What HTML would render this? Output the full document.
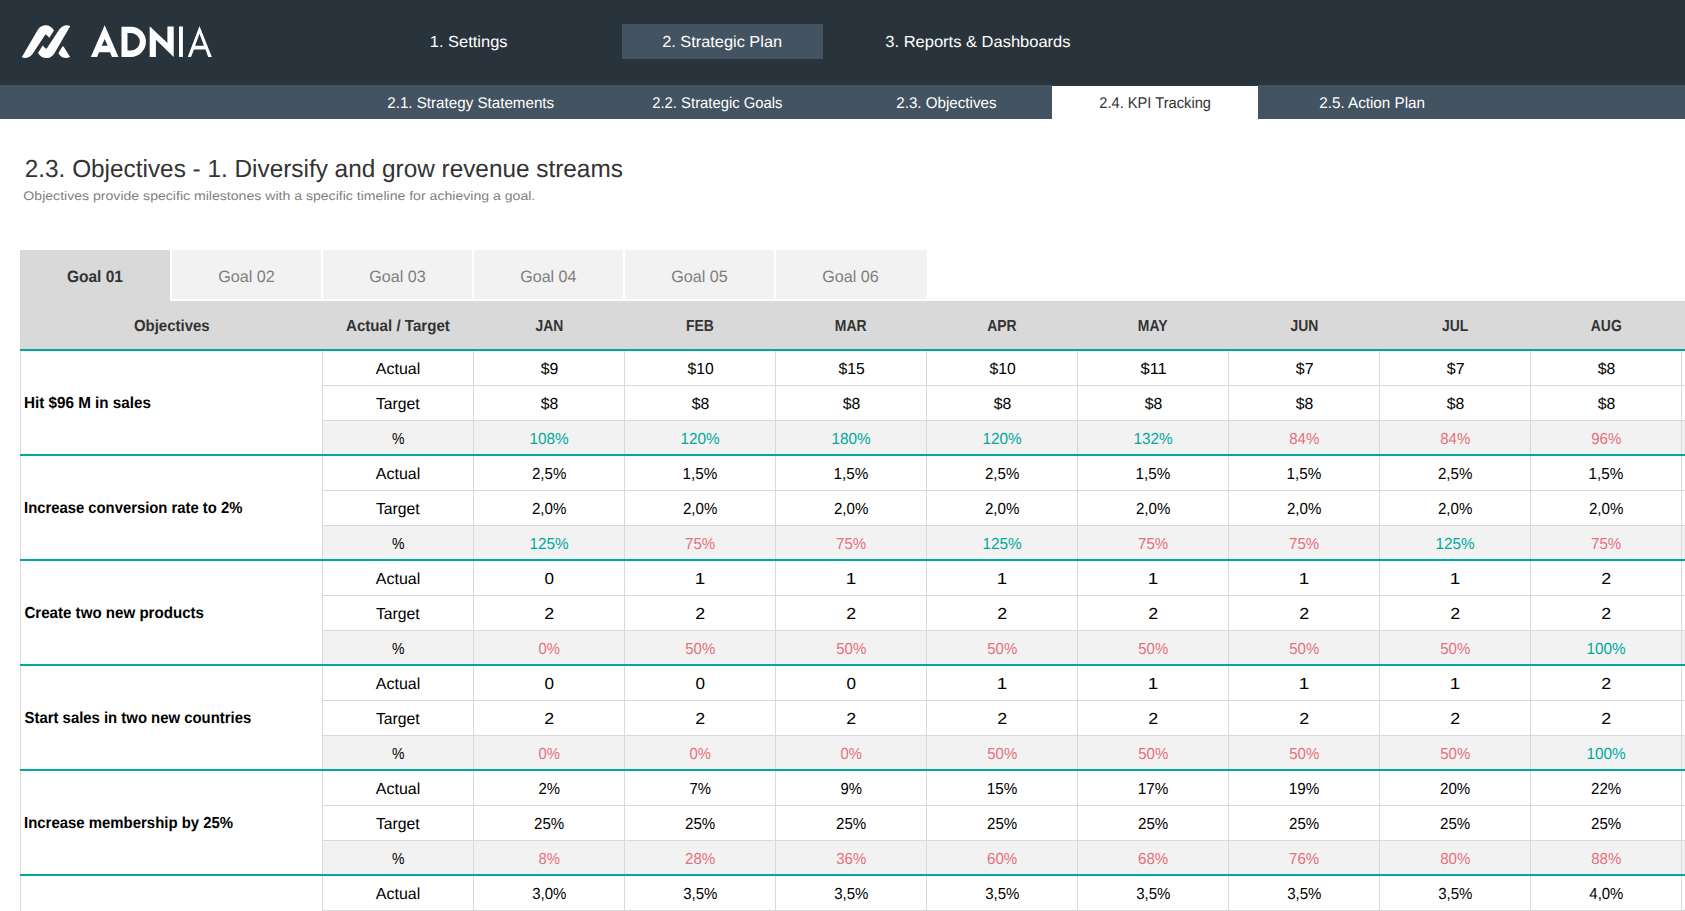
<!DOCTYPE html>
<html><head><meta charset="utf-8"><title>KPI Tracking</title>
<style>
html,body{margin:0;padding:0;background:#ffffff;overflow:hidden;}
svg{display:block;}
text{font-family:"Liberation Sans", sans-serif;white-space:pre;text-rendering:geometricPrecision;}
</style></head>
<body>
<svg width="1685" height="911" viewBox="0 0 1685 911">
<rect x="0" y="0" width="1685" height="85" fill="#29333b"/>
<rect x="622" y="24" width="201" height="35" fill="#445361"/>
<rect x="0" y="85" width="1685" height="34" fill="#445361"/>
<rect x="1052" y="86" width="206" height="33" fill="#ffffff"/>
<rect x="1052" y="85" width="206" height="1" fill="#2d3844"/>
<text x="429.76" y="47" font-size="15.99" fill="#ffffff" textLength="77.81" lengthAdjust="spacingAndGlyphs">1. Settings</text>
<text x="662.18" y="47" font-size="15.99" fill="#ffffff" textLength="119.92" lengthAdjust="spacingAndGlyphs">2. Strategic Plan</text>
<text x="885.34" y="47" font-size="15.99" fill="#ffffff" textLength="185.21" lengthAdjust="spacingAndGlyphs">3. Reports &amp; Dashboards</text>
<text x="387.24" y="108" font-size="15.55" fill="#ffffff" textLength="166.90" lengthAdjust="spacingAndGlyphs">2.1. Strategy Statements</text>
<text x="652.26" y="108" font-size="15.55" fill="#ffffff" textLength="130.30" lengthAdjust="spacingAndGlyphs">2.2. Strategic Goals</text>
<text x="896.24" y="108" font-size="15.55" fill="#ffffff" textLength="100.28" lengthAdjust="spacingAndGlyphs">2.3. Objectives</text>
<text x="1099.27" y="108" font-size="15.55" fill="#333333" textLength="111.69" lengthAdjust="spacingAndGlyphs">2.4. KPI Tracking</text>
<text x="1319.24" y="108" font-size="15.55" fill="#ffffff" textLength="105.74" lengthAdjust="spacingAndGlyphs">2.5. Action Plan</text>
<text x="24.78" y="177" font-size="24.71" fill="#333333" textLength="598.09" lengthAdjust="spacingAndGlyphs">2.3. Objectives - 1. Diversify and grow revenue streams</text>
<text x="23.37" y="200" font-size="12.50" fill="#7f7f7f" textLength="511.91" lengthAdjust="spacingAndGlyphs">Objectives provide specific milestones with a specific timeline for achieving a goal.</text>
<rect x="20" y="250" width="150" height="51" fill="#d9d9d9"/>
<rect x="172" y="250" width="149" height="49" fill="#f2f2f2"/>
<rect x="323" y="250" width="149" height="49" fill="#f2f2f2"/>
<rect x="474" y="250" width="149" height="49" fill="#f2f2f2"/>
<rect x="625" y="250" width="149" height="49" fill="#f2f2f2"/>
<rect x="776" y="250" width="151" height="49" fill="#f2f2f2"/>
<text x="66.88" y="282" font-size="16.42" fill="#333333" font-weight="bold" textLength="56.05" lengthAdjust="spacingAndGlyphs">Goal 01</text>
<text x="218.19" y="282" font-size="16.42" fill="#7f7f7f" textLength="56.66" lengthAdjust="spacingAndGlyphs">Goal 02</text>
<text x="369.19" y="282" font-size="16.42" fill="#7f7f7f" textLength="56.57" lengthAdjust="spacingAndGlyphs">Goal 03</text>
<text x="520.20" y="282" font-size="16.42" fill="#7f7f7f" textLength="56.33" lengthAdjust="spacingAndGlyphs">Goal 04</text>
<text x="671.19" y="282" font-size="16.42" fill="#7f7f7f" textLength="56.49" lengthAdjust="spacingAndGlyphs">Goal 05</text>
<text x="822.19" y="282" font-size="16.42" fill="#7f7f7f" textLength="56.57" lengthAdjust="spacingAndGlyphs">Goal 06</text>
<rect x="20" y="301" width="1665" height="48" fill="#d9d9d9"/>
<text x="133.90" y="331" font-size="15.99" fill="#333333" font-weight="bold" textLength="75.75" lengthAdjust="spacingAndGlyphs">Objectives</text>
<text x="346.02" y="331" font-size="15.99" fill="#333333" font-weight="bold" textLength="103.85" lengthAdjust="spacingAndGlyphs">Actual / Target</text>
<text x="535.44" y="331" font-size="15.99" fill="#333333" font-weight="bold" textLength="27.83" lengthAdjust="spacingAndGlyphs">JAN</text>
<text x="685.95" y="331" font-size="15.99" fill="#333333" font-weight="bold" textLength="27.82" lengthAdjust="spacingAndGlyphs">FEB</text>
<text x="834.86" y="331" font-size="15.99" fill="#333333" font-weight="bold" textLength="31.68" lengthAdjust="spacingAndGlyphs">MAR</text>
<text x="987.29" y="331" font-size="15.99" fill="#333333" font-weight="bold" textLength="29.37" lengthAdjust="spacingAndGlyphs">APR</text>
<text x="1137.84" y="331" font-size="15.99" fill="#333333" font-weight="bold" textLength="29.63" lengthAdjust="spacingAndGlyphs">MAY</text>
<text x="1290.44" y="331" font-size="15.99" fill="#333333" font-weight="bold" textLength="27.83" lengthAdjust="spacingAndGlyphs">JUN</text>
<text x="1441.96" y="331" font-size="15.99" fill="#333333" font-weight="bold" textLength="26.28" lengthAdjust="spacingAndGlyphs">JUL</text>
<text x="1590.80" y="331" font-size="15.99" fill="#333333" font-weight="bold" textLength="30.91" lengthAdjust="spacingAndGlyphs">AUG</text>
<rect x="20" y="349" width="1665" height="2" fill="#00a99d"/>
<rect x="323" y="421" width="1362" height="33" fill="#f2f2f2"/>
<rect x="20" y="454" width="1665" height="2" fill="#00a99d"/>
<rect x="323" y="526" width="1362" height="33" fill="#f2f2f2"/>
<rect x="20" y="559" width="1665" height="2" fill="#00a99d"/>
<rect x="323" y="631" width="1362" height="33" fill="#f2f2f2"/>
<rect x="20" y="664" width="1665" height="2" fill="#00a99d"/>
<rect x="323" y="736" width="1362" height="33" fill="#f2f2f2"/>
<rect x="20" y="769" width="1665" height="2" fill="#00a99d"/>
<rect x="323" y="841" width="1362" height="33" fill="#f2f2f2"/>
<rect x="20" y="874" width="1665" height="2" fill="#00a99d"/>
<rect x="323" y="946" width="1362" height="33" fill="#f2f2f2"/>
<rect x="20" y="979" width="1665" height="2" fill="#00a99d"/>
<rect x="322" y="385" width="1363" height="1" fill="#d9d9d9"/>
<rect x="322" y="420" width="1363" height="1" fill="#d9d9d9"/>
<rect x="322" y="490" width="1363" height="1" fill="#d9d9d9"/>
<rect x="322" y="525" width="1363" height="1" fill="#d9d9d9"/>
<rect x="322" y="595" width="1363" height="1" fill="#d9d9d9"/>
<rect x="322" y="630" width="1363" height="1" fill="#d9d9d9"/>
<rect x="322" y="700" width="1363" height="1" fill="#d9d9d9"/>
<rect x="322" y="735" width="1363" height="1" fill="#d9d9d9"/>
<rect x="322" y="805" width="1363" height="1" fill="#d9d9d9"/>
<rect x="322" y="840" width="1363" height="1" fill="#d9d9d9"/>
<rect x="322" y="910" width="1363" height="1" fill="#d9d9d9"/>
<rect x="322" y="945" width="1363" height="1" fill="#d9d9d9"/>
<rect x="20" y="351" width="1" height="560" fill="#d9d9d9"/>
<rect x="322" y="351" width="1" height="560" fill="#d9d9d9"/>
<rect x="473" y="351" width="1" height="560" fill="#d9d9d9"/>
<rect x="624" y="351" width="1" height="560" fill="#d9d9d9"/>
<rect x="775" y="351" width="1" height="560" fill="#d9d9d9"/>
<rect x="926" y="351" width="1" height="560" fill="#d9d9d9"/>
<rect x="1077" y="351" width="1" height="560" fill="#d9d9d9"/>
<rect x="1228" y="351" width="1" height="560" fill="#d9d9d9"/>
<rect x="1379" y="351" width="1" height="560" fill="#d9d9d9"/>
<rect x="1530" y="351" width="1" height="560" fill="#d9d9d9"/>
<rect x="1681" y="351" width="1" height="560" fill="#d9d9d9"/>
<rect x="20" y="454" width="1665" height="2" fill="#00a99d"/>
<rect x="20" y="559" width="1665" height="2" fill="#00a99d"/>
<rect x="20" y="664" width="1665" height="2" fill="#00a99d"/>
<rect x="20" y="769" width="1665" height="2" fill="#00a99d"/>
<rect x="20" y="874" width="1665" height="2" fill="#00a99d"/>
<rect x="20" y="979" width="1665" height="2" fill="#00a99d"/>
<text x="24.01" y="408" font-size="15.99" fill="#000000" font-weight="bold" textLength="126.93" lengthAdjust="spacingAndGlyphs">Hit $96 M in sales</text>
<text x="540.77" y="374" font-size="15.99" fill="#000000" textLength="17.65" lengthAdjust="spacingAndGlyphs">$9</text>
<text x="540.77" y="409" font-size="15.99" fill="#000000" textLength="17.56" lengthAdjust="spacingAndGlyphs">$8</text>
<text x="529.40" y="444" font-size="15.99" fill="#00a99d" textLength="39.16" lengthAdjust="spacingAndGlyphs">108%</text>
<text x="687.46" y="374" font-size="15.99" fill="#000000" textLength="26.20" lengthAdjust="spacingAndGlyphs">$10</text>
<text x="691.77" y="409" font-size="15.99" fill="#000000" textLength="17.56" lengthAdjust="spacingAndGlyphs">$8</text>
<text x="680.40" y="444" font-size="15.99" fill="#00a99d" textLength="39.16" lengthAdjust="spacingAndGlyphs">120%</text>
<text x="838.46" y="374" font-size="15.99" fill="#000000" textLength="26.20" lengthAdjust="spacingAndGlyphs">$15</text>
<text x="842.77" y="409" font-size="15.99" fill="#000000" textLength="17.56" lengthAdjust="spacingAndGlyphs">$8</text>
<text x="831.40" y="444" font-size="15.99" fill="#00a99d" textLength="39.16" lengthAdjust="spacingAndGlyphs">180%</text>
<text x="989.46" y="374" font-size="15.99" fill="#000000" textLength="26.20" lengthAdjust="spacingAndGlyphs">$10</text>
<text x="993.77" y="409" font-size="15.99" fill="#000000" textLength="17.56" lengthAdjust="spacingAndGlyphs">$8</text>
<text x="982.40" y="444" font-size="15.99" fill="#00a99d" textLength="39.16" lengthAdjust="spacingAndGlyphs">120%</text>
<text x="1140.46" y="374" font-size="15.99" fill="#000000" textLength="26.34" lengthAdjust="spacingAndGlyphs">$11</text>
<text x="1144.77" y="409" font-size="15.99" fill="#000000" textLength="17.56" lengthAdjust="spacingAndGlyphs">$8</text>
<text x="1133.40" y="444" font-size="15.99" fill="#00a99d" textLength="39.16" lengthAdjust="spacingAndGlyphs">132%</text>
<text x="1295.77" y="374" font-size="15.99" fill="#000000" textLength="17.73" lengthAdjust="spacingAndGlyphs">$7</text>
<text x="1295.77" y="409" font-size="15.99" fill="#000000" textLength="17.56" lengthAdjust="spacingAndGlyphs">$8</text>
<text x="1289.18" y="444" font-size="15.99" fill="#e6707a" textLength="30.12" lengthAdjust="spacingAndGlyphs">84%</text>
<text x="1446.77" y="374" font-size="15.99" fill="#000000" textLength="17.73" lengthAdjust="spacingAndGlyphs">$7</text>
<text x="1446.77" y="409" font-size="15.99" fill="#000000" textLength="17.56" lengthAdjust="spacingAndGlyphs">$8</text>
<text x="1440.18" y="444" font-size="15.99" fill="#e6707a" textLength="30.12" lengthAdjust="spacingAndGlyphs">84%</text>
<text x="1597.77" y="374" font-size="15.99" fill="#000000" textLength="17.56" lengthAdjust="spacingAndGlyphs">$8</text>
<text x="1597.77" y="409" font-size="15.99" fill="#000000" textLength="17.56" lengthAdjust="spacingAndGlyphs">$8</text>
<text x="1591.18" y="444" font-size="15.99" fill="#e6707a" textLength="30.12" lengthAdjust="spacingAndGlyphs">96%</text>
<text x="375.82" y="374" font-size="15.99" fill="#000000" textLength="44.39" lengthAdjust="spacingAndGlyphs">Actual</text>
<text x="375.88" y="409" font-size="15.99" fill="#000000" textLength="43.86" lengthAdjust="spacingAndGlyphs">Target</text>
<text x="392.11" y="444" font-size="15.99" fill="#000000" textLength="12.47" lengthAdjust="spacingAndGlyphs">%</text>
<text x="24.04" y="513" font-size="15.99" fill="#000000" font-weight="bold" textLength="218.32" lengthAdjust="spacingAndGlyphs">Increase conversion rate to 2%</text>
<text x="531.97" y="479" font-size="15.99" fill="#000000" textLength="34.42" lengthAdjust="spacingAndGlyphs">2,5%</text>
<text x="531.97" y="514" font-size="15.99" fill="#000000" textLength="34.42" lengthAdjust="spacingAndGlyphs">2,0%</text>
<text x="529.40" y="549" font-size="15.99" fill="#00a99d" textLength="39.16" lengthAdjust="spacingAndGlyphs">125%</text>
<text x="682.58" y="479" font-size="15.99" fill="#000000" textLength="34.81" lengthAdjust="spacingAndGlyphs">1,5%</text>
<text x="682.97" y="514" font-size="15.99" fill="#000000" textLength="34.42" lengthAdjust="spacingAndGlyphs">2,0%</text>
<text x="685.10" y="549" font-size="15.99" fill="#e6707a" textLength="30.20" lengthAdjust="spacingAndGlyphs">75%</text>
<text x="833.58" y="479" font-size="15.99" fill="#000000" textLength="34.81" lengthAdjust="spacingAndGlyphs">1,5%</text>
<text x="833.97" y="514" font-size="15.99" fill="#000000" textLength="34.42" lengthAdjust="spacingAndGlyphs">2,0%</text>
<text x="836.10" y="549" font-size="15.99" fill="#e6707a" textLength="30.20" lengthAdjust="spacingAndGlyphs">75%</text>
<text x="984.97" y="479" font-size="15.99" fill="#000000" textLength="34.42" lengthAdjust="spacingAndGlyphs">2,5%</text>
<text x="984.97" y="514" font-size="15.99" fill="#000000" textLength="34.42" lengthAdjust="spacingAndGlyphs">2,0%</text>
<text x="982.40" y="549" font-size="15.99" fill="#00a99d" textLength="39.16" lengthAdjust="spacingAndGlyphs">125%</text>
<text x="1135.58" y="479" font-size="15.99" fill="#000000" textLength="34.81" lengthAdjust="spacingAndGlyphs">1,5%</text>
<text x="1135.97" y="514" font-size="15.99" fill="#000000" textLength="34.42" lengthAdjust="spacingAndGlyphs">2,0%</text>
<text x="1138.10" y="549" font-size="15.99" fill="#e6707a" textLength="30.20" lengthAdjust="spacingAndGlyphs">75%</text>
<text x="1286.58" y="479" font-size="15.99" fill="#000000" textLength="34.81" lengthAdjust="spacingAndGlyphs">1,5%</text>
<text x="1286.97" y="514" font-size="15.99" fill="#000000" textLength="34.42" lengthAdjust="spacingAndGlyphs">2,0%</text>
<text x="1289.10" y="549" font-size="15.99" fill="#e6707a" textLength="30.20" lengthAdjust="spacingAndGlyphs">75%</text>
<text x="1437.97" y="479" font-size="15.99" fill="#000000" textLength="34.42" lengthAdjust="spacingAndGlyphs">2,5%</text>
<text x="1437.97" y="514" font-size="15.99" fill="#000000" textLength="34.42" lengthAdjust="spacingAndGlyphs">2,0%</text>
<text x="1435.40" y="549" font-size="15.99" fill="#00a99d" textLength="39.16" lengthAdjust="spacingAndGlyphs">125%</text>
<text x="1588.58" y="479" font-size="15.99" fill="#000000" textLength="34.81" lengthAdjust="spacingAndGlyphs">1,5%</text>
<text x="1588.97" y="514" font-size="15.99" fill="#000000" textLength="34.42" lengthAdjust="spacingAndGlyphs">2,0%</text>
<text x="1591.10" y="549" font-size="15.99" fill="#e6707a" textLength="30.20" lengthAdjust="spacingAndGlyphs">75%</text>
<text x="375.82" y="479" font-size="15.99" fill="#000000" textLength="44.39" lengthAdjust="spacingAndGlyphs">Actual</text>
<text x="375.88" y="514" font-size="15.99" fill="#000000" textLength="43.86" lengthAdjust="spacingAndGlyphs">Target</text>
<text x="392.11" y="549" font-size="15.99" fill="#000000" textLength="12.47" lengthAdjust="spacingAndGlyphs">%</text>
<text x="24.40" y="618" font-size="15.99" fill="#000000" font-weight="bold" textLength="179.62" lengthAdjust="spacingAndGlyphs">Create two new products</text>
<text x="544.56" y="584" font-size="15.99" fill="#000000" textLength="9.51" lengthAdjust="spacingAndGlyphs">0</text>
<text x="544.35" y="619" font-size="15.99" fill="#000000" textLength="9.92" lengthAdjust="spacingAndGlyphs">2</text>
<text x="538.57" y="654" font-size="15.99" fill="#e6707a" textLength="21.39" lengthAdjust="spacingAndGlyphs">0%</text>
<text x="694.82" y="584" font-size="15.99" fill="#000000" textLength="10.50" lengthAdjust="spacingAndGlyphs">1</text>
<text x="695.35" y="619" font-size="15.99" fill="#000000" textLength="9.92" lengthAdjust="spacingAndGlyphs">2</text>
<text x="685.25" y="654" font-size="15.99" fill="#e6707a" textLength="30.04" lengthAdjust="spacingAndGlyphs">50%</text>
<text x="845.82" y="584" font-size="15.99" fill="#000000" textLength="10.50" lengthAdjust="spacingAndGlyphs">1</text>
<text x="846.35" y="619" font-size="15.99" fill="#000000" textLength="9.92" lengthAdjust="spacingAndGlyphs">2</text>
<text x="836.25" y="654" font-size="15.99" fill="#e6707a" textLength="30.04" lengthAdjust="spacingAndGlyphs">50%</text>
<text x="996.82" y="584" font-size="15.99" fill="#000000" textLength="10.50" lengthAdjust="spacingAndGlyphs">1</text>
<text x="997.35" y="619" font-size="15.99" fill="#000000" textLength="9.92" lengthAdjust="spacingAndGlyphs">2</text>
<text x="987.25" y="654" font-size="15.99" fill="#e6707a" textLength="30.04" lengthAdjust="spacingAndGlyphs">50%</text>
<text x="1147.82" y="584" font-size="15.99" fill="#000000" textLength="10.50" lengthAdjust="spacingAndGlyphs">1</text>
<text x="1148.35" y="619" font-size="15.99" fill="#000000" textLength="9.92" lengthAdjust="spacingAndGlyphs">2</text>
<text x="1138.25" y="654" font-size="15.99" fill="#e6707a" textLength="30.04" lengthAdjust="spacingAndGlyphs">50%</text>
<text x="1298.82" y="584" font-size="15.99" fill="#000000" textLength="10.50" lengthAdjust="spacingAndGlyphs">1</text>
<text x="1299.35" y="619" font-size="15.99" fill="#000000" textLength="9.92" lengthAdjust="spacingAndGlyphs">2</text>
<text x="1289.25" y="654" font-size="15.99" fill="#e6707a" textLength="30.04" lengthAdjust="spacingAndGlyphs">50%</text>
<text x="1449.82" y="584" font-size="15.99" fill="#000000" textLength="10.50" lengthAdjust="spacingAndGlyphs">1</text>
<text x="1450.35" y="619" font-size="15.99" fill="#000000" textLength="9.92" lengthAdjust="spacingAndGlyphs">2</text>
<text x="1440.25" y="654" font-size="15.99" fill="#e6707a" textLength="30.04" lengthAdjust="spacingAndGlyphs">50%</text>
<text x="1601.35" y="584" font-size="15.99" fill="#000000" textLength="9.92" lengthAdjust="spacingAndGlyphs">2</text>
<text x="1601.35" y="619" font-size="15.99" fill="#000000" textLength="9.92" lengthAdjust="spacingAndGlyphs">2</text>
<text x="1586.40" y="654" font-size="15.99" fill="#00a99d" textLength="39.16" lengthAdjust="spacingAndGlyphs">100%</text>
<text x="375.82" y="584" font-size="15.99" fill="#000000" textLength="44.39" lengthAdjust="spacingAndGlyphs">Actual</text>
<text x="375.88" y="619" font-size="15.99" fill="#000000" textLength="43.86" lengthAdjust="spacingAndGlyphs">Target</text>
<text x="392.11" y="654" font-size="15.99" fill="#000000" textLength="12.47" lengthAdjust="spacingAndGlyphs">%</text>
<text x="24.55" y="723" font-size="15.99" fill="#000000" font-weight="bold" textLength="226.66" lengthAdjust="spacingAndGlyphs">Start sales in two new countries</text>
<text x="544.56" y="689" font-size="15.99" fill="#000000" textLength="9.51" lengthAdjust="spacingAndGlyphs">0</text>
<text x="544.35" y="724" font-size="15.99" fill="#000000" textLength="9.92" lengthAdjust="spacingAndGlyphs">2</text>
<text x="538.57" y="759" font-size="15.99" fill="#e6707a" textLength="21.39" lengthAdjust="spacingAndGlyphs">0%</text>
<text x="695.56" y="689" font-size="15.99" fill="#000000" textLength="9.51" lengthAdjust="spacingAndGlyphs">0</text>
<text x="695.35" y="724" font-size="15.99" fill="#000000" textLength="9.92" lengthAdjust="spacingAndGlyphs">2</text>
<text x="689.57" y="759" font-size="15.99" fill="#e6707a" textLength="21.39" lengthAdjust="spacingAndGlyphs">0%</text>
<text x="846.56" y="689" font-size="15.99" fill="#000000" textLength="9.51" lengthAdjust="spacingAndGlyphs">0</text>
<text x="846.35" y="724" font-size="15.99" fill="#000000" textLength="9.92" lengthAdjust="spacingAndGlyphs">2</text>
<text x="840.57" y="759" font-size="15.99" fill="#e6707a" textLength="21.39" lengthAdjust="spacingAndGlyphs">0%</text>
<text x="996.82" y="689" font-size="15.99" fill="#000000" textLength="10.50" lengthAdjust="spacingAndGlyphs">1</text>
<text x="997.35" y="724" font-size="15.99" fill="#000000" textLength="9.92" lengthAdjust="spacingAndGlyphs">2</text>
<text x="987.25" y="759" font-size="15.99" fill="#e6707a" textLength="30.04" lengthAdjust="spacingAndGlyphs">50%</text>
<text x="1147.82" y="689" font-size="15.99" fill="#000000" textLength="10.50" lengthAdjust="spacingAndGlyphs">1</text>
<text x="1148.35" y="724" font-size="15.99" fill="#000000" textLength="9.92" lengthAdjust="spacingAndGlyphs">2</text>
<text x="1138.25" y="759" font-size="15.99" fill="#e6707a" textLength="30.04" lengthAdjust="spacingAndGlyphs">50%</text>
<text x="1298.82" y="689" font-size="15.99" fill="#000000" textLength="10.50" lengthAdjust="spacingAndGlyphs">1</text>
<text x="1299.35" y="724" font-size="15.99" fill="#000000" textLength="9.92" lengthAdjust="spacingAndGlyphs">2</text>
<text x="1289.25" y="759" font-size="15.99" fill="#e6707a" textLength="30.04" lengthAdjust="spacingAndGlyphs">50%</text>
<text x="1449.82" y="689" font-size="15.99" fill="#000000" textLength="10.50" lengthAdjust="spacingAndGlyphs">1</text>
<text x="1450.35" y="724" font-size="15.99" fill="#000000" textLength="9.92" lengthAdjust="spacingAndGlyphs">2</text>
<text x="1440.25" y="759" font-size="15.99" fill="#e6707a" textLength="30.04" lengthAdjust="spacingAndGlyphs">50%</text>
<text x="1601.35" y="689" font-size="15.99" fill="#000000" textLength="9.92" lengthAdjust="spacingAndGlyphs">2</text>
<text x="1601.35" y="724" font-size="15.99" fill="#000000" textLength="9.92" lengthAdjust="spacingAndGlyphs">2</text>
<text x="1586.40" y="759" font-size="15.99" fill="#00a99d" textLength="39.16" lengthAdjust="spacingAndGlyphs">100%</text>
<text x="375.82" y="689" font-size="15.99" fill="#000000" textLength="44.39" lengthAdjust="spacingAndGlyphs">Actual</text>
<text x="375.88" y="724" font-size="15.99" fill="#000000" textLength="43.86" lengthAdjust="spacingAndGlyphs">Target</text>
<text x="392.11" y="759" font-size="15.99" fill="#000000" textLength="12.47" lengthAdjust="spacingAndGlyphs">%</text>
<text x="24.03" y="828" font-size="15.99" fill="#000000" font-weight="bold" textLength="209.10" lengthAdjust="spacingAndGlyphs">Increase membership by 25%</text>
<text x="538.42" y="794" font-size="15.99" fill="#000000" textLength="21.55" lengthAdjust="spacingAndGlyphs">2%</text>
<text x="534.10" y="829" font-size="15.99" fill="#000000" textLength="30.20" lengthAdjust="spacingAndGlyphs">25%</text>
<text x="538.49" y="864" font-size="15.99" fill="#e6707a" textLength="21.47" lengthAdjust="spacingAndGlyphs">8%</text>
<text x="689.42" y="794" font-size="15.99" fill="#000000" textLength="21.55" lengthAdjust="spacingAndGlyphs">7%</text>
<text x="685.10" y="829" font-size="15.99" fill="#000000" textLength="30.20" lengthAdjust="spacingAndGlyphs">25%</text>
<text x="685.10" y="864" font-size="15.99" fill="#e6707a" textLength="30.20" lengthAdjust="spacingAndGlyphs">28%</text>
<text x="840.49" y="794" font-size="15.99" fill="#000000" textLength="21.47" lengthAdjust="spacingAndGlyphs">9%</text>
<text x="836.10" y="829" font-size="15.99" fill="#000000" textLength="30.20" lengthAdjust="spacingAndGlyphs">25%</text>
<text x="836.25" y="864" font-size="15.99" fill="#e6707a" textLength="30.04" lengthAdjust="spacingAndGlyphs">36%</text>
<text x="986.71" y="794" font-size="15.99" fill="#000000" textLength="30.60" lengthAdjust="spacingAndGlyphs">15%</text>
<text x="987.10" y="829" font-size="15.99" fill="#000000" textLength="30.20" lengthAdjust="spacingAndGlyphs">25%</text>
<text x="987.10" y="864" font-size="15.99" fill="#e6707a" textLength="30.20" lengthAdjust="spacingAndGlyphs">60%</text>
<text x="1137.71" y="794" font-size="15.99" fill="#000000" textLength="30.60" lengthAdjust="spacingAndGlyphs">17%</text>
<text x="1138.10" y="829" font-size="15.99" fill="#000000" textLength="30.20" lengthAdjust="spacingAndGlyphs">25%</text>
<text x="1138.10" y="864" font-size="15.99" fill="#e6707a" textLength="30.20" lengthAdjust="spacingAndGlyphs">68%</text>
<text x="1288.71" y="794" font-size="15.99" fill="#000000" textLength="30.60" lengthAdjust="spacingAndGlyphs">19%</text>
<text x="1289.10" y="829" font-size="15.99" fill="#000000" textLength="30.20" lengthAdjust="spacingAndGlyphs">25%</text>
<text x="1289.10" y="864" font-size="15.99" fill="#e6707a" textLength="30.20" lengthAdjust="spacingAndGlyphs">76%</text>
<text x="1440.10" y="794" font-size="15.99" fill="#000000" textLength="30.20" lengthAdjust="spacingAndGlyphs">20%</text>
<text x="1440.10" y="829" font-size="15.99" fill="#000000" textLength="30.20" lengthAdjust="spacingAndGlyphs">25%</text>
<text x="1440.18" y="864" font-size="15.99" fill="#e6707a" textLength="30.12" lengthAdjust="spacingAndGlyphs">80%</text>
<text x="1591.10" y="794" font-size="15.99" fill="#000000" textLength="30.20" lengthAdjust="spacingAndGlyphs">22%</text>
<text x="1591.10" y="829" font-size="15.99" fill="#000000" textLength="30.20" lengthAdjust="spacingAndGlyphs">25%</text>
<text x="1591.18" y="864" font-size="15.99" fill="#e6707a" textLength="30.12" lengthAdjust="spacingAndGlyphs">88%</text>
<text x="375.82" y="794" font-size="15.99" fill="#000000" textLength="44.39" lengthAdjust="spacingAndGlyphs">Actual</text>
<text x="375.88" y="829" font-size="15.99" fill="#000000" textLength="43.86" lengthAdjust="spacingAndGlyphs">Target</text>
<text x="392.11" y="864" font-size="15.99" fill="#000000" textLength="12.47" lengthAdjust="spacingAndGlyphs">%</text>
<text x="532.13" y="899" font-size="15.99" fill="#000000" textLength="34.26" lengthAdjust="spacingAndGlyphs">3,0%</text>
<text x="683.13" y="899" font-size="15.99" fill="#000000" textLength="34.26" lengthAdjust="spacingAndGlyphs">3,5%</text>
<text x="834.13" y="899" font-size="15.99" fill="#000000" textLength="34.26" lengthAdjust="spacingAndGlyphs">3,5%</text>
<text x="985.13" y="899" font-size="15.99" fill="#000000" textLength="34.26" lengthAdjust="spacingAndGlyphs">3,5%</text>
<text x="1136.13" y="899" font-size="15.99" fill="#000000" textLength="34.26" lengthAdjust="spacingAndGlyphs">3,5%</text>
<text x="1287.13" y="899" font-size="15.99" fill="#000000" textLength="34.26" lengthAdjust="spacingAndGlyphs">3,5%</text>
<text x="1438.13" y="899" font-size="15.99" fill="#000000" textLength="34.26" lengthAdjust="spacingAndGlyphs">3,5%</text>
<text x="1589.36" y="899" font-size="15.99" fill="#000000" textLength="34.03" lengthAdjust="spacingAndGlyphs">4,0%</text>
<text x="375.82" y="899" font-size="15.99" fill="#000000" textLength="44.39" lengthAdjust="spacingAndGlyphs">Actual</text>
<text x="375.88" y="934" font-size="15.99" fill="#000000" textLength="43.86" lengthAdjust="spacingAndGlyphs">Target</text>
<text x="392.11" y="969" font-size="15.99" fill="#000000" textLength="12.47" lengthAdjust="spacingAndGlyphs">%</text>
<svg x="18" y="20" width="56" height="42" viewBox="0 0 1215 911">
<path fill="#ffffff" d="M85,800 L430,210 C480,140 540,115 600,115 C680,115 740,160 780,225 L680,385 L621,326 Q600,305 583,331 L340,700 C300,770 240,825 160,825 L90,815 Z"/>
<path fill="#ffffff" transform="rotate(180 607 470)" d="M85,800 L430,210 C480,140 540,115 600,115 C680,115 740,160 780,225 L680,385 L621,326 Q600,305 583,331 L340,700 C300,770 240,825 160,825 L90,815 Z"/>
<path fill="#ffffff" d="M955,585 Q975,550 995,585 L1130,805 L1060,825 C980,825 910,790 875,720 Z"/>
</svg>
<path fill="#ffffff" d="M90.8,56.9 L104.7,25.3 L118.5,56.9 L112,56.9 L110,52.3 L99.1,52.3 L97.1,56.9 Z M104.7,38.9 L101.7,45.8 L107.7,45.8 Z" fill-rule="evenodd"/>
<path fill="#ffffff" fill-rule="evenodd" d="M121.5,26.7 L130.8,26.7 A15.1,15.1 0 0 1 130.8,56.9 L121.5,56.9 Z M127.5,33.1 L131.2,33.1 A8.65,8.65 0 0 1 131.2,50.4 L127.5,50.4 Z"/>
<path fill="#ffffff" d="M149.7,26.3 L167.4,43.1 L167.4,26.6 L173.7,26.6 L173.7,56.9 L155.9,39.8 L155.9,56.9 L149.7,56.9 Z"/>
<rect x="179" y="26.5" width="3.9" height="30.4" fill="#ffffff"/>
<path fill="#ffffff" fill-rule="evenodd" d="M187.7,56.9 L199.5,26 L211.9,56.9 L208.2,56.9 L205.5,49.5 L194,49.5 L191,56.9 Z M199.5,33.8 L195.1,45.8 L203.9,45.8 Z"/>

</svg>
</body></html>
